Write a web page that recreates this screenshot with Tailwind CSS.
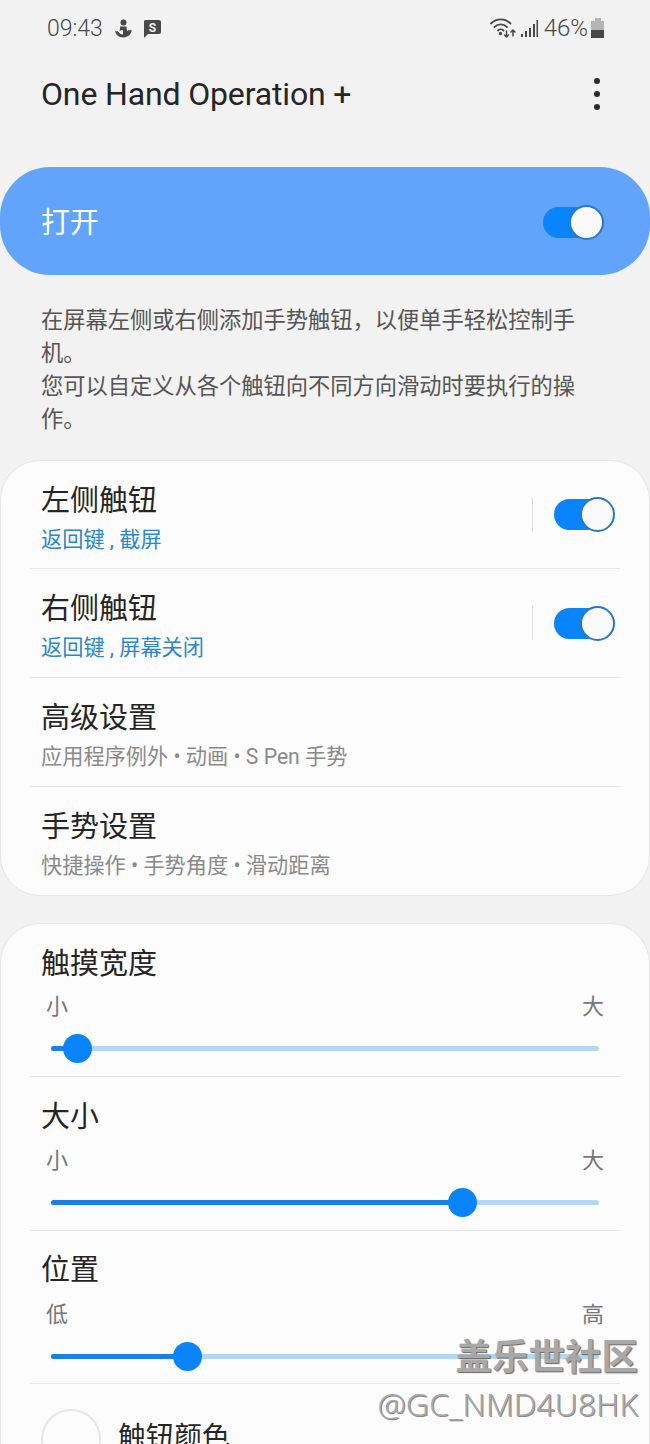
<!DOCTYPE html>
<html lang="zh-CN">
<head>
    <meta charset="UTF-8">
    <title>One Hand Operation +</title>
    <script src="https://cdn.jsdelivr.net/npm/@tailwindcss/browser@4"></script>
</head>
<body class="bg-[#f2f2f2] font-['Roboto','Noto_Sans_CJK_SC',sans-serif] text-[#252525]">
    <div class="relative h-[1444px] w-[650px] overflow-hidden">
        <!-- status bar -->
        <div class="flex h-[56px] items-center justify-between pl-[47px] pr-[46px] text-[#484848]">
            <div class="flex items-center">
                <span class="text-[23px] font-light leading-none">09:43</span>
                <svg class="ml-[11px]" width="18" height="19" viewBox="0 0 18 19" fill="#484848">
                    <circle cx="9.500" cy="3.500" r="3"/>
                    <path d="M6.500 7.500h6l.5 4.500 2-1 1 .5 1.500-1c.5 3.500-2.500 7.500-8 8-5 0-8-3-8.500-7l1.500 1 1-.5 1.500 1c.5-2 1.500-3.500 1-5.500z"/>
                    <path d="M4 12c1 2.500 3 3.500 5 3.500V11z" fill="#f2f2f2"/>
                </svg>
                <svg class="ml-[11px]" width="18" height="19" viewBox="0 0 18 19">
                    <path d="M2 1h14a2 2 0 0 1 2 2v10a2 2 0 0 1-2 2H5l-4 4V3a2 2 0 0 1 1-2z" fill="#484848"/>
                    <text x="9.500" y="12.500" text-anchor="middle" font-size="12" font-weight="700" fill="#f2f2f2" font-family="Roboto">S</text>
                </svg>
            </div>
            <div class="flex items-center">
                <svg width="27" height="22" viewBox="0 0 27 22" fill="none" stroke="#484848" stroke-width="1.800" stroke-linecap="round">
                    <path d="M1 6.500C6.500 1 15 1 20.500 6.500"/>
                    <path d="M4.500 10c3.500-3.500 9-3.500 12.500 0"/>
                    <path d="M8 13.500c1.500-1.500 4-1.500 5.500 0"/>
                    <circle cx="10.500" cy="16.500" r=".8" fill="#484848"/>
                    <path d="M16.500 14v6M14.500 18l2 2 2-2" stroke-width="1.500"/>
                    <path d="M23 19v-6M21 15l2-2 2 2" stroke-width="1.500"/>
                </svg>
                <svg class="ml-[4px]" width="17" height="19" viewBox="0 0 17 19" fill="#484848">
                    <rect x="0" y="15" width="2" height="3"/>
                    <rect x="4" y="12" width="2" height="6"/>
                    <rect x="8" y="9" width="2" height="9"/>
                    <rect x="12" y="5" width="2" height="13"/>
                    <rect x="15.500" y="1" width="1.500" height="17"/>
                </svg>
                <span class="ml-[6px] text-[24px] font-light leading-none">46%</span>
                <div class="ml-[3px] flex w-[13px] flex-col items-center">
                    <div class="h-[3px] w-[6px] bg-[#b5b5b5]"></div>
                    <div class="h-[9px] w-full bg-[#b5b5b5]"></div>
                    <div class="h-[8px] w-full bg-[#484848]"></div>
                </div>
            </div>
        </div>

        <!-- app bar -->
        <div class="flex h-[76px] items-center justify-between pl-[41px] pr-[50px]">
            <h1 class="text-[32px] font-normal leading-none tracking-[-0.15px]">One Hand Operation +</h1>
            <div class="flex flex-col gap-[7px]">
                <div class="size-[6px] rounded-full bg-[#2a2a2a]"></div>
                <div class="size-[6px] rounded-full bg-[#2a2a2a]"></div>
                <div class="size-[6px] rounded-full bg-[#2a2a2a]"></div>
            </div>
        </div>

        <!-- master switch -->
        <div class="mt-[35px] flex h-[108px] items-center justify-between rounded-[50px] bg-[#62a4fb] pl-[41px] pr-[47px]">
            <span class="pt-[5px] text-[29px] leading-none text-white">打开</span>
            <div class="relative mt-[2px] h-[31px] w-[60px] rounded-full bg-[#0a84fa]">
                <div class="absolute right-[-1px] top-[-2px] size-[35px] rounded-full border-2 border-[#2a78c4] bg-[#fafafa]"></div>
            </div>
        </div>

        <!-- description -->
        <p class="mt-[29px] pl-[41px] pr-[70px] text-[22.25px] leading-[33px] text-[#555555]">在屏幕左侧或右侧添加手势触钮，以便单手轻松控制手机。<br>您可以自定义从各个触钮向不同方向滑动时要执行的操作。</p>

        <!-- button list -->
        <div class="mt-[24px] rounded-[40px] border border-[#e6e6e6] bg-[#fcfcfc] px-[29px]">
            <div class="flex h-[108px] items-center justify-between border-b border-[#e8e8e8]">
                <div class="pl-[11px] pt-[7px]">
                    <div class="text-[29px] leading-[36px]">左侧触钮</div>
                    <div class="mt-[7px] text-[21.200px] leading-[28px] text-[#2c87c9]">返回键 , 截屏</div>
                </div>
                <div class="flex items-center">
                    <div class="h-[34px] w-px bg-[#dddddd]"></div>
                    <div class="relative ml-[21px] mr-[6px] h-[31px] w-[60px] rounded-full bg-[#0a84fa]">
                        <div class="absolute right-[-1px] top-[-2px] size-[35px] rounded-full border-2 border-[#2a78c4] bg-[#fafafa]"></div>
                    </div>
                </div>
            </div>
            <div class="flex h-[109px] items-center justify-between border-b border-[#e8e8e8]">
                <div class="pl-[11px] pt-[7px]">
                    <div class="text-[29px] leading-[36px]">右侧触钮</div>
                    <div class="mt-[7px] text-[21.200px] leading-[28px] text-[#2c87c9]">返回键 , 屏幕关闭</div>
                </div>
                <div class="flex items-center">
                    <div class="h-[34px] w-px bg-[#dddddd]"></div>
                    <div class="relative ml-[21px] mr-[6px] h-[31px] w-[60px] rounded-full bg-[#0a84fa]">
                        <div class="absolute right-[-1px] top-[-2px] size-[35px] rounded-full border-2 border-[#2a78c4] bg-[#fafafa]"></div>
                    </div>
                </div>
            </div>
            <div class="flex h-[109px] items-center border-b border-[#e8e8e8]">
                <div class="pl-[11px] pt-[7px]">
                    <div class="text-[29px] leading-[36px]">高级设置</div>
                    <div class="mt-[7px] text-[21.200px] leading-[28px] text-[#8a8a8a]">应用程序例外 • 动画 • S Pen 手势</div>
                </div>
            </div>
            <div class="flex h-[108px] items-center">
                <div class="pl-[11px] pt-[7px]">
                    <div class="text-[29px] leading-[36px]">手势设置</div>
                    <div class="mt-[7px] text-[21.200px] leading-[28px] text-[#8a8a8a]">快捷操作 • 手势角度 • 滑动距离</div>
                </div>
            </div>
        </div>

        <!-- sliders -->
        <div class="mt-[27px] rounded-t-[40px] border border-[#e6e6e6] bg-[#fcfcfc] px-[29px]">
            <div class="h-[153px] border-b border-[#e8e8e8] px-[11px] pt-[22px]">
                <div class="text-[29px] leading-[36px]">触摸宽度</div>
                <div class="mt-[11px] flex justify-between px-[5px] text-[22px] leading-[28px] text-[#777777]"><span>小</span><span>大</span></div>
                <div class="relative mx-[10px] mt-[25px] h-[5px] rounded-full bg-[#b3d6f2]">
                    <div class="absolute left-0 top-0 h-full w-[27px] rounded-full bg-[#1a80e6]"></div>
                    <div class="absolute left-[12px] top-[-12px] size-[29px] rounded-full bg-[#0a84fa]"></div>
                </div>
            </div>
            <div class="h-[154px] border-b border-[#e8e8e8] px-[11px] pt-[22px]">
                <div class="text-[29px] leading-[36px]">大小</div>
                <div class="mt-[12px] flex justify-between px-[5px] text-[22px] leading-[28px] text-[#777777]"><span>小</span><span>大</span></div>
                <div class="relative mx-[10px] mt-[25px] h-[5px] rounded-full bg-[#b3d6f2]">
                    <div class="absolute left-0 top-0 h-full w-[411px] rounded-full bg-[#1a80e6]"></div>
                    <div class="absolute left-[397px] top-[-12px] size-[29px] rounded-full bg-[#0a84fa]"></div>
                </div>
            </div>
            <div class="h-[153px] border-b border-[#e8e8e8] px-[11px] pt-[21px]">
                <div class="text-[29px] leading-[36px]">位置</div>
                <div class="mt-[13px] flex justify-between px-[5px] text-[22px] leading-[28px] text-[#777777]"><span>低</span><span>高</span></div>
                <div class="relative mx-[10px] mt-[25px] h-[5px] rounded-full bg-[#b3d6f2]">
                    <div class="absolute left-0 top-0 h-full w-[137px] rounded-full bg-[#1a80e6]"></div>
                    <div class="absolute left-[122px] top-[-12px] size-[29px] rounded-full bg-[#0a84fa]"></div>
                </div>
            </div>
            <div class="flex items-start pl-[11px] pt-[25px]">
                <div class="size-[60px] rounded-full border-2 border-[#e6e6e6] bg-[#fcfcfc]"></div>
                <div class="ml-[17px] mt-[11px] text-[28px] leading-[36px]">触钮颜色</div>
            </div>
        </div>

        <!-- watermark -->
        <div class="absolute right-[12px] top-[1336px] text-right text-[#a8a8a8]">
            <div class="text-[36.500px] font-bold leading-[44px] [text-shadow:1px_1px_1px_#666666]">盖乐世社区</div>
            <div class="mt-[4px] font-['Noto_Sans',sans-serif] text-[32px] font-light leading-[40px] [text-shadow:1px_1px_0_#8a8a8a]">@GC_NMD4U8HK</div>
        </div>
    </div>
</body>
</html>
